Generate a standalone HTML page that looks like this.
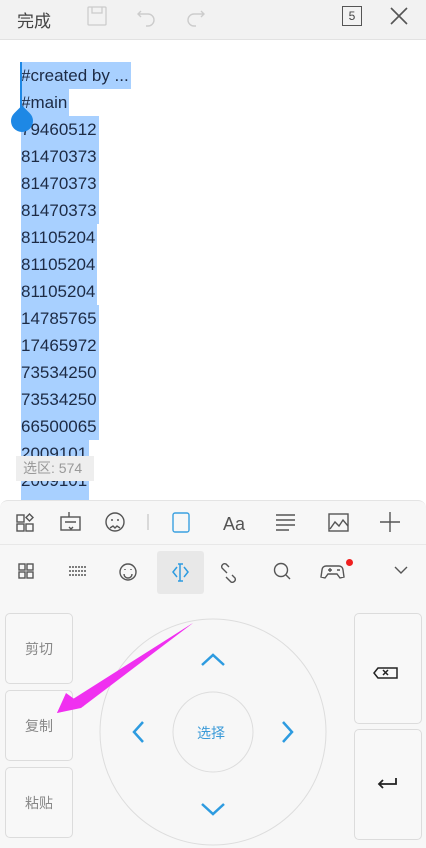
<!DOCTYPE html>
<html><head><meta charset="utf-8"><style>
*{margin:0;padding:0;box-sizing:border-box}
body{width:426px;height:848px;overflow:hidden;background:#fff;font-family:"Liberation Sans","Noto Sans CJK SC",sans-serif;position:relative}
.top{position:absolute;left:0;top:0;width:426px;height:40px;background:#f2f2f2;border-bottom:1px solid #e2e2e2}
.ln{position:absolute;left:21px;height:27px;line-height:27px;font-size:17px;color:#1d2b45;background:#a8d0ff;padding-right:2px}
.tip{position:absolute;left:16px;top:456px;width:78px;height:25px;background:#eee;color:#999;font-size:14px;line-height:25px;padding-left:7px}
.panel{position:absolute;left:0;top:500px;width:426px;height:348px;background:#f7f7f7;border-top:1px solid #e4e4e4;border-radius:8px 8px 0 0}
.row1{position:absolute;left:0;top:500px;width:426px;height:45px;border-bottom:1px solid #e8e8e8}
.btn{position:absolute;border:1px solid #dcdcdc;border-radius:5px;background:#f8f8f8;color:#888;font-size:14px;display:flex;align-items:center;justify-content:center}
svg{position:absolute}
</style></head><body>
<div class="top"></div>
<div style="position:absolute;left:17px;top:7px;font-size:17px;color:#444">完成</div>
<svg style="left:86px;top:5px" width="22" height="22" viewBox="0 0 22 22" fill="none" stroke="#ccc" stroke-width="1.3"><rect x="2" y="2" width="18" height="18" rx="1"/><path d="M6 2v6h10V2"/></svg>
<svg style="left:136px;top:5px" width="22" height="22" viewBox="0 0 22 22" fill="none" stroke="#ccc" stroke-width="1.4"><path d="M5 6l-3 3 3 3M2 9h10a6 6 0 0 1 0 12h-2"/></svg>
<svg style="left:184px;top:5px" width="22" height="22" viewBox="0 0 22 22" fill="none" stroke="#ccc" stroke-width="1.4"><path d="M17 6l3 3-3 3M20 9H10a6 6 0 0 0 0 12h2"/></svg>
<div style="position:absolute;left:342px;top:6px;width:20px;height:20px;border:1.3px solid #555;font-size:12px;color:#444;text-align:center;line-height:18px">5</div>
<svg style="left:389px;top:6px" width="20" height="20" viewBox="0 0 20 20" stroke="#555" stroke-width="1.6"><path d="M2 2l16 16M18 2L2 18"/></svg>

<div class="ln" style="top:62px">#created by ...</div>
<div class="ln" style="top:89px">#main</div>
<div class="ln" style="top:116px">79460512</div>
<div class="ln" style="top:143px">81470373</div>
<div class="ln" style="top:170px">81470373</div>
<div class="ln" style="top:197px">81470373</div>
<div class="ln" style="top:224px">81105204</div>
<div class="ln" style="top:251px">81105204</div>
<div class="ln" style="top:278px">81105204</div>
<div class="ln" style="top:305px">14785765</div>
<div class="ln" style="top:332px">17465972</div>
<div class="ln" style="top:359px">73534250</div>
<div class="ln" style="top:386px">73534250</div>
<div class="ln" style="top:413px">66500065</div>
<div class="ln" style="top:440px">2009101</div>
<div class="ln" style="top:467px;height:33px">2009101</div>
<div style="position:absolute;left:20px;top:62px;width:2px;height:50px;background:#1e88e5"></div>
<div style="position:absolute;left:11px;top:110px;width:22px;height:22px;border-radius:50% 0 50% 50%;transform:rotate(-45deg);background:#1e88e5"></div>
<div class="tip">选区: 574</div>

<div class="panel"></div>
<div class="row1"></div>
<svg style="left:0;top:500px" width="426" height="100" fill="none" stroke="#555" stroke-width="1.4">
<rect x="17" y="15" width="7" height="7"/><rect x="17" y="24" width="7" height="7"/><rect x="26" y="24" width="7" height="7"/><path d="M29.5 14l3.5 3.5-3.5 3.5-3.5-3.5z"/>
<rect x="61" y="17" width="19" height="13"/><path d="M69 12v5M65 22h11M69 27l2 2 2-2"/>
<circle cx="115" cy="22" r="9"/><path d="M110 28l3-2 2 2 2-2 3 2M111 20h2M117 20h2"/>
<path d="M148 14v16" stroke="#ccc"/>
<rect x="173" y="13" width="16" height="19" rx="2" stroke="#3aa0e0"/>
<text x="223" y="30" font-family="Liberation Sans" font-size="18" fill="#555" stroke="none">Aa</text>
<path d="M276 15h19M276 20h19M276 25h19M276 30h13"/>
<rect x="329" y="14" width="19" height="17"/><path d="M330 29l5-7 4 4 4-6 5 6"/>
<path d="M390 12v20M380 22h20"/>
<rect x="19" y="64" width="6" height="6"/><rect x="27" y="64" width="6" height="6"/><rect x="19" y="72" width="6" height="6"/><rect x="27" y="72" width="6" height="6"/>
<path d="M69 67h17M69 71h17M69 75h17" stroke-dasharray="2 1"/>
<circle cx="128" cy="72" r="8"/><path d="M124 74a4 4 0 0 0 8 0M125 69v1M131 69v1"/>
<path d="M229 67l-3-3a3 3 0 0 0-4 4l5 5M232 75l3 3a3 3 0 0 1-4 4l-5-5"/>
<circle cx="281" cy="70" r="6.5"/><path d="M286 75l4 4"/>
<path d="M327 66h12a4 4 0 0 1 4 4l1 7-4 1-3-4h-9l-3 4-4-1 1-7a4 4 0 0 1 4-4zM328 70h4M330 68v4M337 70h3"/>
<path d="M395 67l6 6 6-6"/>
</svg>
<div style="position:absolute;left:157px;top:551px;width:47px;height:43px;background:#e8e8e8;border-radius:3px"></div>
<svg style="left:157px;top:551px" width="47" height="43" fill="none" stroke="#2d9be0" stroke-width="1.5"><path d="M20 16l-4 5 4 5M27 16l4 5-4 5M23 13v17M21 13h5M21 30h5"/></svg>
<div style="position:absolute;left:346px;top:559px;width:7px;height:7px;border-radius:50%;background:#f02020"></div>

<div class="btn" style="left:5px;top:613px;width:68px;height:71px">剪切</div>
<div class="btn" style="left:5px;top:690px;width:68px;height:71px">复制</div>
<div class="btn" style="left:5px;top:767px;width:68px;height:71px">粘贴</div>
<div class="btn" style="left:354px;top:613px;width:68px;height:111px"></div>
<div class="btn" style="left:354px;top:729px;width:68px;height:111px"></div>
<svg style="left:0;top:600px" width="426" height="248" fill="none">
<circle cx="213" cy="132" r="113" stroke="#ddd"/>
<circle cx="213" cy="132" r="40" stroke="#ddd"/>
<g stroke="#2d9be0" stroke-width="2.5"><path d="M202 65l11-10 11 10M202 204l11 10 11-10M143 122l-9 10 9 10M283 122l9 10-9 10"/></g>
<text x="197" y="138" font-family="Noto Sans CJK SC" font-size="14" fill="#3a9ad8">选择</text>
<path d="M378 68h19v10h-19l-4-5z" stroke="#222" stroke-width="1.5"/><path d="M383 70l5 5M388 70l-5 5" stroke="#222" stroke-width="1.5"/>
<path d="M396 178v6h-17M383 180l-4 4 4 4" stroke="#222" stroke-width="1.8"/>
<path d="M193 23L82 104l-2-2 113-79zM193 23L81 108 57 113 66 94 73 99z" fill="#f030f0"/>
<path d="M193 23L74 99 80 106z M57 113L66 93 84 106z" fill="#f030f0"/>
</svg>
</body></html>
